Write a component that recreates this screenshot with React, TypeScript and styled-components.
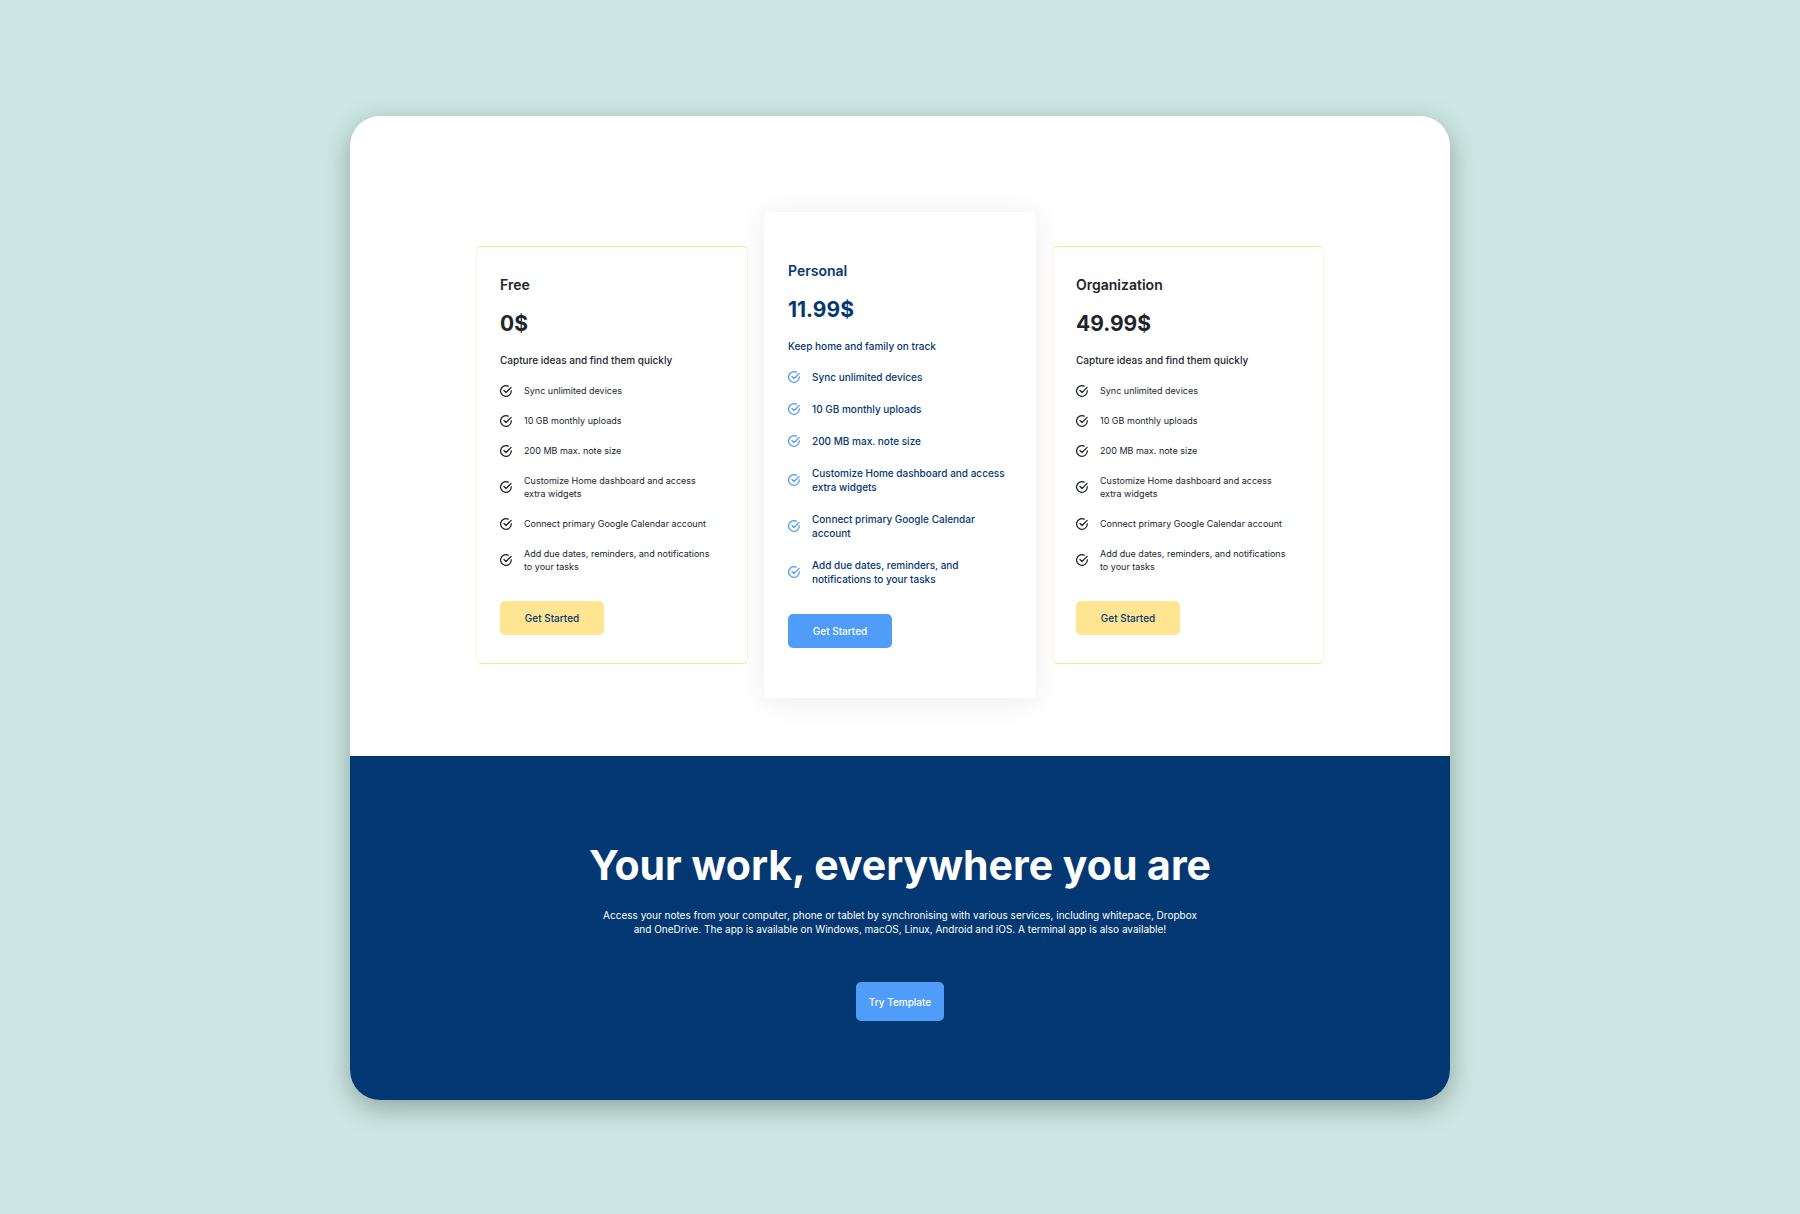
import React from "react";
import styled, { createGlobalStyle, css } from "styled-components";

const GlobalStyle = createGlobalStyle`
  * { box-sizing: border-box; }
  body {
    margin: 0;
    background: #cde8e4;
    font-family: Inter, "Liberation Sans", sans-serif;
    color: #212529;
  }
`;

const Page = styled.main`
  min-height: 100vh;
  display: flex;
  align-items: center;
  justify-content: center;
  padding: 116px 24px 114px;
`;

const Sheet = styled.div`
  flex: 1;
  max-width: 1100px;
  border-radius: 30px;
  background: #ffffff;
  overflow: hidden;
  box-shadow: 0 8px 28px rgba(0, 0, 0, 0.3);
`;

const Pricing = styled.section`
  display: flex;
  align-items: center;
  justify-content: center;
  gap: 16px;
  padding: 96px 24px 58px;
`;

const Card = styled.article<{ $featured?: boolean }>`
  flex: 0 1 272px;
  padding: 28px 23px;
  border: 1px solid #ffe492;
  border-left-color: #fff4d3;
  border-right-color: #fff4d3;
  border-radius: 5px;
  ${({ $featured }) =>
    $featured &&
    css`
      padding: 48px 23px 49px;
      border-color: transparent;
      color: #043873;
      background: #ffffff;
      box-shadow: 0 3px 30px rgba(0, 0, 0, 0.08);
    `}
`;

const PlanName = styled.h2`
  margin: 0 0 15px;
  font-size: 14px;
  font-weight: 600;
  line-height: 20px;
`;

const Price = styled.p`
  margin: 0 0 15px;
  font-size: 21px;
  font-weight: 700;
  line-height: 28px;
`;

const Tagline = styled.p`
  margin: 0 0 16px;
  font-size: 10px;
  font-weight: 500;
  line-height: 15px;
`;

const Features = styled.ul<{ $featured?: boolean }>`
  display: flex;
  flex-direction: column;
  gap: ${({ $featured }) => ($featured ? "18px" : "17px")};
  margin: 0 0 28px;
  padding: 0 ${({ $featured }) => ($featured ? "0" : "8px")} 0 0;
  list-style: none;
  font-size: ${({ $featured }) => ($featured ? "10px" : "9px")};
  font-weight: ${({ $featured }) => ($featured ? 500 : 400)};
  line-height: ${({ $featured }) => ($featured ? "14px" : "13px")};
`;

const Feature = styled.li`
  display: flex;
  align-items: center;
  gap: 12px;
`;

const Tick = styled.svg<{ $featured?: boolean }>`
  flex: none;
  width: 12px;
  height: 12px;
  color: ${({ $featured }) => ($featured ? "#4f9cf9" : "#212529")};
`;

const Button = styled.button<{ $tone: "yellow" | "blue"; $large?: boolean }>`
  height: ${({ $large }) => ($large ? "39px" : "34px")};
  min-width: ${({ $large }) => ($large ? "88px" : "104px")};
  padding: 0 12px;
  border: 0;
  border-radius: 5px;
  display: block;
  font: 500 10px/14px Inter, "Liberation Sans", sans-serif;
  color: ${({ $tone }) => ($tone === "blue" ? "#ffffff" : "#043873")};
  background: ${({ $tone }) => ($tone === "blue" ? "#4f9cf9" : "#ffe492")};
  cursor: pointer;
`;

const Banner = styled.section`
  display: flex;
  flex-direction: column;
  align-items: center;
  padding: 84px 24px 79px;
  color: #ffffff;
  background: #043873;
  text-align: center;
`;

const Headline = styled.h1`
  margin: 0 0 18px;
  font-size: 41px;
  font-weight: 700;
  line-height: 50px;
`;

const Copy = styled.p`
  max-width: 608px;
  margin: 0 0 46px;
  font-size: 10px;
  line-height: 14px;
`;

type Plan = { name: string; price: string; tagline: string; featured?: boolean };

const plans: Plan[] = [
  { name: "Free", price: "0$", tagline: "Capture ideas and find them quickly" },
  { name: "Personal", price: "11.99$", tagline: "Keep home and family on track", featured: true },
  { name: "Organization", price: "49.99$", tagline: "Capture ideas and find them quickly" },
];

const features = [
  "Sync unlimited devices",
  "10 GB monthly uploads",
  "200 MB max. note size",
  "Customize Home dashboard and access extra widgets",
  "Connect primary Google Calendar account",
  "Add due dates, reminders, and notifications to your tasks",
];

function TickIcon({ featured }: { featured?: boolean }) {
  return (
    <Tick
      $featured={featured}
      viewBox="0 0 24 24"
      fill="none"
      stroke="currentColor"
      strokeWidth="2.5"
      strokeLinecap="round"
      strokeLinejoin="round"
      aria-hidden="true"
    >
      <path d="M22.6 11.5A10.7 10.7 0 1 1 16.5 2.3" />
      <path d="M8 11l4 4L22.3 4.7" />
    </Tick>
  );
}

function PlanCard({ name, price, tagline, featured }: Plan) {
  return (
    <Card $featured={featured}>
      <PlanName>{name}</PlanName>
      <Price>{price}</Price>
      <Tagline>{tagline}</Tagline>
      <Features $featured={featured}>
        {features.map((text) => (
          <Feature key={text}>
            <TickIcon featured={featured} />
            <span>{text}</span>
          </Feature>
        ))}
      </Features>
      <Button type="button" $tone={featured ? "blue" : "yellow"}>
        Get Started
      </Button>
    </Card>
  );
}

export default function App() {
  return (
    <>
      <GlobalStyle />
      <Page>
        <Sheet>
          <Pricing>
            {plans.map((plan) => (
              <PlanCard key={plan.name} {...plan} />
            ))}
          </Pricing>
          <Banner>
            <Headline>Your work, everywhere you are</Headline>
            <Copy>
              Access your notes from your computer, phone or tablet by synchronising with various
              services, including whitepace, Dropbox and OneDrive. The app is available on Windows,
              macOS, Linux, Android and iOS. A terminal app is also available!
            </Copy>
            <Button type="button" $tone="blue" $large>
              Try Template
            </Button>
          </Banner>
        </Sheet>
      </Page>
    </>
  );
}
